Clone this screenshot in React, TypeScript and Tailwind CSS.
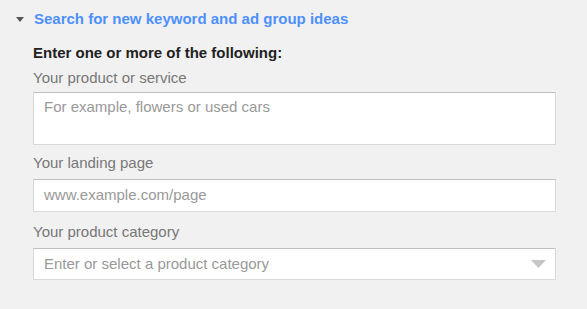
import React from "react";

export default function App() {
  return (
    <div className="w-[587px] h-[309px] bg-[#f1f1f1] overflow-hidden" style={{ fontFamily: '"Liberation Sans", Arial, sans-serif' }}>
      <div className="flex items-center h-[18px] mt-[10px] pl-[16px]">
        <svg width="8" height="5" viewBox="0 0 8 5" className="mr-[10px]">
          <polygon points="0,0 8,0 4,5" fill="#555" />
        </svg>
        <span className="text-[15px] leading-[18px] font-bold text-[#4d90fe]">
          Search for new keyword and ad group ideas
        </span>
      </div>
      <div className="pl-[33px] pr-[31px]">
        <div className="mt-[16px] text-[15px] leading-[18px] font-bold text-[#222]">
          Enter one or more of the following:
        </div>
        <div className="mt-[7px] text-[15px] leading-[18px] text-[#777]">Your product or service</div>
        <div className="mt-[5px] h-[53px] bg-white border border-[#d9d9d9] border-t-[#c0c0c0] px-[10px] pt-[5px] text-[15px] leading-[18px] text-[#999]">
          For example, flowers or used cars
        </div>
        <div className="mt-[9px] text-[15px] leading-[18px] text-[#777]">Your landing page</div>
        <div className="mt-[7px] h-[33px] bg-white border border-[#d9d9d9] border-t-[#c0c0c0] px-[10px] flex items-center text-[15px] text-[#999]">
          www.example.com/page
        </div>
        <div className="mt-[11px] text-[15px] leading-[18px] text-[#777]">Your product category</div>
        <div className="mt-[7px] h-[32px] bg-white border border-[#d9d9d9] border-t-[#c0c0c0] pl-[10px] pr-[9px] flex items-center justify-between text-[15px] text-[#999]">
          <span>Enter or select a product category</span>
          <svg width="15" height="8" viewBox="0 0 15 8">
            <polygon points="0,0 15,0 7.5,8" fill="#c6c6c6" />
          </svg>
        </div>
      </div>
    </div>
  );
}
